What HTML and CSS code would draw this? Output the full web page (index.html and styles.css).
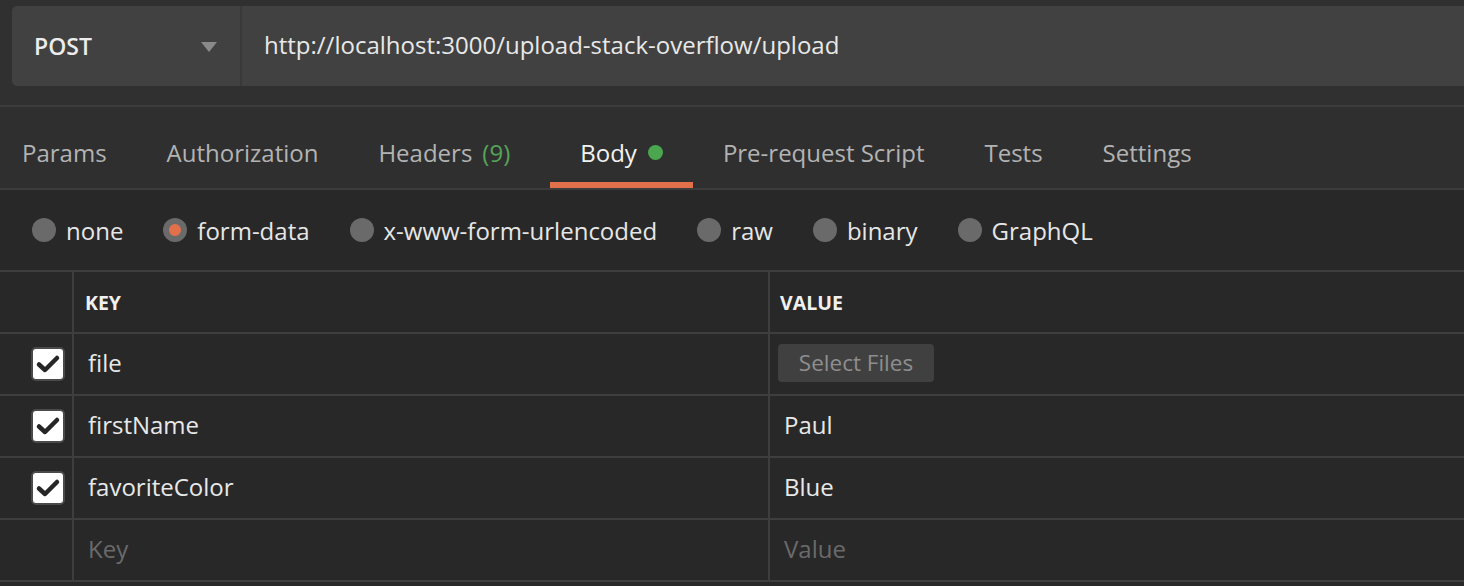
FILE: index.html
```html
<!DOCTYPE html>
<html>
<head>
<meta charset="utf-8">
<link rel="stylesheet" href="styles.css">
</head>
<body>
<div class="top">
  <div class="urlbar">
    <div class="method">
      <span class="method-name">POST</span>
      <svg class="caret" width="16" height="10" viewBox="0 0 16 10"><path d="M0 0H16L8 10Z" fill="#8a8a8a"/></svg>
    </div>
    <div class="url">http://localhost:3000/upload-stack-overflow/upload</div>
  </div>
</div>
<div class="tabs">
  <div class="tab">Params</div>
  <div class="tab">Authorization</div>
  <div class="tab">Headers<span class="count">(9)</span></div>
  <div class="tab active">Body<span class="dot"></span></div>
  <div class="tab">Pre-request Script</div>
  <div class="tab">Tests</div>
  <div class="tab">Settings</div>
</div>
<div class="modes">
  <div class="mode"><span class="radio"></span>none</div>
  <div class="mode"><span class="radio on"></span>form-data</div>
  <div class="mode"><span class="radio"></span>x-www-form-urlencoded</div>
  <div class="mode"><span class="radio"></span>raw</div>
  <div class="mode"><span class="radio"></span>binary</div>
  <div class="mode"><span class="radio"></span>GraphQL</div>
</div>
<div class="table">
  <div class="row head">
    <div class="cell check"></div>
    <div class="cell key">KEY</div>
    <div class="cell value">VALUE</div>
  </div>
  <div class="row">
    <div class="cell check"><span class="box"><svg width="30" height="30" viewBox="0 0 30 30"><path d="M6 15.5L12 21L24 9" fill="none" stroke="#262626" stroke-width="4.5" stroke-linecap="round" stroke-linejoin="round"/></svg></span></div>
    <div class="cell key">file</div>
    <div class="cell value"><span class="filebtn">Select Files</span></div>
  </div>
  <div class="row">
    <div class="cell check"><span class="box"><svg width="30" height="30" viewBox="0 0 30 30"><path d="M6 15.5L12 21L24 9" fill="none" stroke="#262626" stroke-width="4.5" stroke-linecap="round" stroke-linejoin="round"/></svg></span></div>
    <div class="cell key">firstName</div>
    <div class="cell value">Paul</div>
  </div>
  <div class="row">
    <div class="cell check"><span class="box"><svg width="30" height="30" viewBox="0 0 30 30"><path d="M6 15.5L12 21L24 9" fill="none" stroke="#262626" stroke-width="4.5" stroke-linecap="round" stroke-linejoin="round"/></svg></span></div>
    <div class="cell key">favoriteColor</div>
    <div class="cell value">Blue</div>
  </div>
  <div class="row">
    <div class="cell check"></div>
    <div class="cell key placeholder">Key</div>
    <div class="cell value placeholder">Value</div>
  </div>
</div>
</body>
</html>
```
FILE: styles.css
```css
* { box-sizing: border-box; }
html, body {
  margin: 0;
  padding: 0;
}
body {
  width: 1464px;
  height: 586px;
  overflow: hidden;
  background: #282828;
  font-family: "Open Sans", "Liberation Sans", sans-serif;
  color: #e6e6e6;
}
.top {
  height: 107px;
  padding: 6px 0 0 12px;
  background: #303030;
  border-bottom: 2px solid #3c3c3c;
  overflow: hidden;
}
.urlbar {
  height: 80px;
  margin-right: -20px;
  background: #414141;
  border-radius: 5px;
  display: flex;
  align-items: center;
}
.method {
  width: 230px;
  height: 100%;
  display: flex;
  align-items: center;
  justify-content: space-between;
  padding: 0 23px 0 22px;
  border-right: 2px solid #393939;
}
.method-name {
  font-size: 23px;
  font-weight: 600;
  color: #ececec;
}
.caret { margin-top: 2px; }
.url {
  padding-left: 22px;
  font-size: 24px;
  color: #e8e8e8;
  margin-top: -4px;
}
.tabs {
  height: 83px;
  display: flex;
  background: #2f2f2f;
  border-bottom: 2px solid #3c3c3c;
}
.tab {
  display: flex;
  align-items: center;
  padding: 15px 30px 0 30px;
  border-bottom: 6px solid transparent;
  font-size: 24px;
  color: #b3b3b3;
  white-space: pre;
}
.tab:first-child { padding-left: 22px; }
.tab.active {
  color: #f2f2f2;
  border-bottom-color: #e2714b;
}
.count {
  color: #55a358;
  margin-left: 10px;
  margin-right: 10px;
}
.dot {
  width: 15px;
  height: 15px;
  border-radius: 50%;
  background: #4aa64f;
  margin-left: 11px;
  margin-top: 1px;
}
.modes {
  height: 80px;
  display: flex;
  align-items: center;
  padding-left: 32px;
  gap: 40px;
}
.mode {
  display: flex;
  align-items: center;
  gap: 10px;
  font-size: 24px;
  color: #e6e6e6;
}
.radio {
  width: 24px;
  height: 24px;
  border-radius: 50%;
  background: #6a6a6a;
  display: flex;
  align-items: center;
  justify-content: center;
}
.radio.on::before {
  content: "";
  width: 12px;
  height: 12px;
  border-radius: 50%;
  background: #e2714b;
}
.table {
  border-top: 2px solid #3e3e3e;
}
.row {
  height: 62px;
  display: grid;
  grid-template-columns: 74px 696px 1fr;
  border-bottom: 2px solid #3e3e3e;
}
.cell {
  display: flex;
  align-items: center;
  padding-bottom: 3px;
  font-size: 24px;
  color: #e8e8e8;
}
.check {
  border-right: 2px solid #3e3e3e;
  padding-left: 31px;
  padding-bottom: 0;
}
.key {
  border-right: 2px solid #3e3e3e;
  padding-left: 14px;
}
.value { padding-left: 14px; }
.head .cell {
  font-size: 19.5px;
  font-weight: 700;
  color: #f0f0f0;
  padding-bottom: 0;
}
.head .key { padding-left: 11px; }
.head .value { padding-left: 10px; }
.placeholder { color: #6a6a6a; }
.box {
  width: 34px;
  height: 34px;
  border-radius: 5px;
  background: #ffffff;
  border: 2px solid #4a4a4a;
  display: flex;
  align-items: center;
  justify-content: center;
}
.filebtn {
  margin-left: -6px;
  height: 38px;
  width: 156px;
  border-radius: 4px;
  background: #404040;
  color: #8e8e8e;
  font-size: 22.5px;
  display: flex;
  align-items: center;
  justify-content: center;
}
```
